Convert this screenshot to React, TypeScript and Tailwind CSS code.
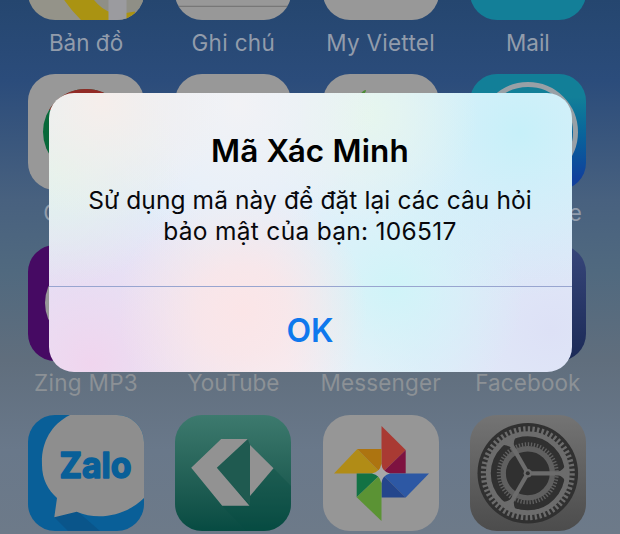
import React from "react";

function AppIcon({ children, className = "" }: { children?: React.ReactNode; className?: string }) {
  return (
    <div className={`h-[116px] w-[116px] shrink-0 overflow-hidden rounded-[27px] ${className}`}>
      {children && (
        <svg viewBox="0 0 116 116" className="block h-full w-full">
          {children}
        </svg>
      )}
    </div>
  );
}

function AppTile({ label, labelClass = "", children }: { label: string; labelClass?: string; children: React.ReactNode }) {
  return (
    <div className="flex h-[170.3px] w-[116px] flex-col items-center">
      {children}
      <span className={`mt-[8.5px] whitespace-nowrap text-[22.5px] leading-[28px] ${labelClass}`}>{label}</span>
    </div>
  );
}

function Maps() {
  return (
    <AppIcon className="bg-[#949389]">
      <path d="M0 0H116V116H100Q70 112 58 84Z" fill="#8f8f86" />
      <path d="M22 70Q34 98 54 117H84V109Q70 104 62 90Z" fill="#aa9312" />
      <path d="M98 116V109L107 107.5V116Z" fill="#aa9312" />
      <rect x="80.5" width="18" height="116" fill="#9b9b9f" />
    </AppIcon>
  );
}

function Chrome() {
  return (
    <AppIcon className="bg-[#989898]">
      <circle cx="58" cy="58" r="43" fill="#08693a" />
      <path d="M21 36A43 43 0 0 1 95 36Z" fill="#922a26" />
    </AppIcon>
  );
}

function AppStore() {
  return (
    <AppIcon className="bg-linear-to-b from-[#127f98] from-20% to-[#11409c] to-90%">
      <circle cx="58" cy="58" r="47.5" fill="none" stroke="#98a0a6" strokeWidth="5" />
    </AppIcon>
  );
}

function Zalo() {
  return (
    <AppIcon className="bg-[#095f98]">
      <path d="M26 102L49 96L72 116H40Z" fill="#0a558a" />
      <path
        d="M42 0C22 10 13 29 14 50C14 64 20 75 29 83L26.3 102.3L48.7 96.7C70 106 98 101 116 83V0Z"
        fill="#8e8e8e"
      />
      <text
        x="31.5"
        y="62.5"
        textLength="72"
        lengthAdjust="spacingAndGlyphs"
        className="fill-[#095f98] stroke-[#095f98] font-[Inter] text-[36px] font-bold"
        strokeWidth="1.6"
        strokeLinejoin="round"
      >
        Zalo
      </text>
    </AppIcon>
  );
}

function GreenApp() {
  return (
    <AppIcon className="bg-linear-to-b from-[#3d7a6e] to-[#064b42]">
      <path d="M98.5 53.3L116 71V116H72L47 91Z" fill="#064b42" opacity=".3" />
      <path d="M72.8 24L75 30V90L41.8 52.7Z" fill="#1f5a50" />
      <path d="M46.2 24H72.8L41.8 52.7L74.5 90.7H47.2L16.2 52.7Z" fill="#929292" />
      <path d="M75 30L98.5 53.3L75 81Z" fill="#929292" />
    </AppIcon>
  );
}

function Photos() {
  return (
    <AppIcon className="bg-[#969696]">
      <path d="M58.5 11L82.7 35L58.5 58.5Z" fill="#a93a33" />
      <path d="M82.7 35V58.5H58.5Z" fill="#7e1240" />
      <path d="M11 58.5L34.3 34L58.5 58.5Z" fill="#b18c16" />
      <path d="M34.3 34H58.5V58.5Z" fill="#ad7410" />
      <path d="M58.5 58.5H106L82.7 82.5Z" fill="#2d58a4" />
      <path d="M58.5 58.5L82.7 82.5H58.5Z" fill="#24468c" />
      <path d="M33.7 58.5H58.5L33.7 82.3Z" fill="#127244" />
      <path d="M33.7 82.3L58.5 58.5V106Z" fill="#5b9334" />
      <path d="M58.3 49Q59.5 57 67 58.5Q59.5 60 58.3 68Q57 60 49 58.5Q57 57 58.3 49Z" fill="#a8a8a8" />
    </AppIcon>
  );
}

function Settings() {
  return (
    <AppIcon className="bg-linear-to-b from-[#747474] to-[#4c4c4c]">
      <g transform="translate(57.8 58.3)" fill="none">
        <circle r="50.3" fill="#303030" />
        <circle r="44.2" stroke="#6c6c6c" strokeWidth="5.6" pathLength="120" strokeDasharray="1 1" />
        <circle r="39.5" stroke="#6c6c6c" strokeWidth="5" />
        <circle r="29" stroke="#606060" strokeWidth="4" pathLength="120" strokeDasharray="0.9 1.1" />
        <circle r="24.6" stroke="#606060" strokeWidth="5.4" />
        <g stroke="#6c6c6c">
          {[0, 120, 240].map((angle) => (
            <g key={angle} transform={`rotate(${angle})`}>
              <path d="M2 0H38" strokeWidth="4.2" />
              <path d="M28 0Q34 -1 38 -7V7Q34 1 28 0Z" fill="#6c6c6c" strokeWidth="1.5" />
            </g>
          ))}
        </g>
        <circle r="4.2" fill="#6c6c6c" />
        <circle r="2" fill="#303030" />
      </g>
    </AppIcon>
  );
}

function HomeScreen() {
  return (
    <div className="-mt-[96px] grid grid-cols-[repeat(4,116px)] gap-x-[31.3px] pl-[28px]">
      <AppTile label="Bản đồ" labelClass="text-[#929cab]"><Maps /></AppTile>
      <AppTile label="Ghi chú" labelClass="text-[#929cab] tracking-[0.35px]">
        <AppIcon className="bg-[#989898]">
          <path d="M0 102.3H116" stroke="#707070" strokeWidth="1" />
        </AppIcon>
      </AppTile>
      <AppTile label="My Viettel" labelClass="text-[#929cab] tracking-[0.25px]"><AppIcon className="bg-[#989898]" /></AppTile>
      <AppTile label="Mail" labelClass="text-[#929cab]"><AppIcon className="bg-[#137f98]" /></AppTile>

      <AppTile label="Chrome" labelClass="text-[#929cab] tracking-[0.2px]"><Chrome /></AppTile>
      <AppTile label=""><AppIcon className="bg-[#989898]" /></AppTile>
      <AppTile label="">
        <AppIcon className="bg-[#989898]">
          <path d="M37 21Q40 16 43 16Q43 19 38 23Z" fill="#4b8b35" />
        </AppIcon>
      </AppTile>
      <AppTile label="App Store" labelClass="text-[#929cab] tracking-[0.3px]"><AppStore /></AppTile>

      <AppTile label="Zing MP3" labelClass="text-[#8c9196] tracking-[0.3px]">
        <AppIcon className="bg-[#460a63]">
          <circle cx="58" cy="58" r="41" fill="#989898" />
        </AppIcon>
      </AppTile>
      <AppTile label="YouTube" labelClass="text-[#8c9196]"><AppIcon className="bg-[#989898]" /></AppTile>
      <AppTile label="Messenger" labelClass="text-[#8c9196] tracking-[0.15px]"><AppIcon className="bg-[#989898]" /></AppTile>
      <AppTile label="Facebook" labelClass="text-[#8c9196] tracking-[0.1px]">
        <AppIcon className="bg-linear-to-b from-[#37467a] to-[#1b2a57]" />
      </AppTile>

      <Zalo />
      <GreenApp />
      <Photos />
      <Settings />
    </div>
  );
}

function Alert() {
  return (
    <div
      role="alertdialog"
      className="absolute left-[48.5px] top-[93px] flex h-[278.5px] w-[523px] flex-col overflow-hidden rounded-[25px] bg-[#e4effa] bg-[radial-gradient(circle_at_10%_3%,#f6eeeb_0,#f6eeeb00_120px),radial-gradient(circle_at_2%_27%,#e3f3eb_0,#e3f3eb00_120px),radial-gradient(circle_at_36%_4%,#f2f2f5_0,#f2f2f500_140px),radial-gradient(circle_at_61%_8%,#e6f6ee_0,#e6f6ee00_110px),radial-gradient(circle_at_90%_14%,#c7f0f9_0,#c7f0f900_165px),radial-gradient(circle_at_37%_78%,#fbe5e7_0,#fbe5e7cc_45px,#fbe5e700_125px),radial-gradient(circle_at_66%_70%,#d0f4f8_0,#d0f4f800_130px),radial-gradient(circle_at_8%_97%,#f0d5ee_0,#f0d5ee00_170px),radial-gradient(circle_at_96%_85%,#dde1f6_0,#dde1f600_180px),radial-gradient(circle_at_2%_65%,#dfe4f8_0,#dfe4f800_160px),radial-gradient(circle_at_45%_98%,#f3eff6_0,#f3eff600_140px)] text-center text-black"
    >
      <div className="flex h-[193px] shrink-0 flex-col items-center pt-[38px]">
        <h1 className="whitespace-nowrap text-[31.5px] font-semibold leading-[40px] tracking-[0.15px]">Mã Xác Minh</h1>
        <p className="mt-[14px] whitespace-nowrap text-[24.5px] leading-[31px] text-[#08080c]">
          <span className="block tracking-[0.1px]">Sử dụng mã này để đặt lại các câu hỏi</span>
          <span className="block tracking-[0.3px]">bảo mật của bạn: 106517</span>
        </p>
      </div>
      <button className="flex flex-1 items-center justify-center border-t border-[#98a5d0] pt-[3px] text-[32px] font-semibold text-[#0f78ed]">
        OK
      </button>
    </div>
  );
}

export default function App() {
  return (
    <main className="relative flex h-[534px] w-[620px] flex-col overflow-hidden bg-[linear-gradient(to_bottom,#25466f_0,#2b4c7b_80px,#48617f_200px,#50697f_270px,#606e7d_360px,#69788a_450px,#6d7a89_534px)] font-[Inter,sans-serif]">
      <HomeScreen />
      <Alert />
    </main>
  );
}
